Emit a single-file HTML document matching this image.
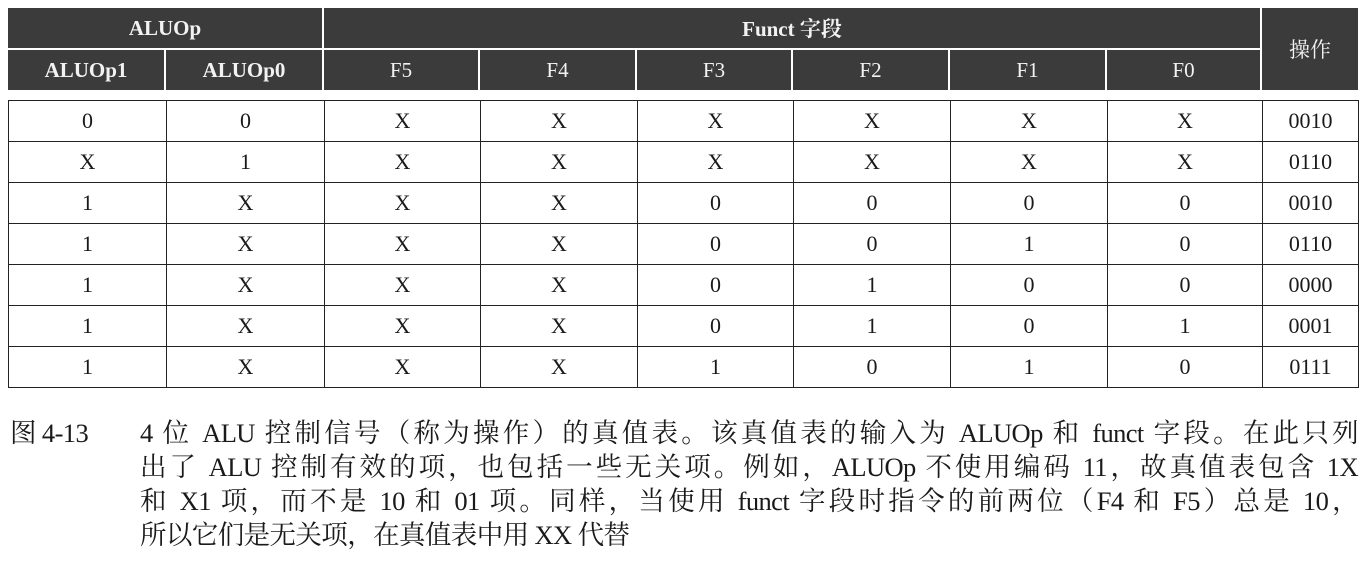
<!DOCTYPE html>
<html><head><meta charset="utf-8"><style>
body{margin:0;width:1368px;height:572px;background:#fff;position:relative;overflow:hidden;font-family:"Liberation Serif","Noto Serif CJK SC",serif;color:#1a1a1a}
.h{position:absolute;background:#3b3b3b;color:#f2f2f2;font-weight:bold;font-size:21px;display:flex;align-items:center;justify-content:center}
table{position:absolute;left:8px;top:100px;border-collapse:collapse;font-size:22px}
td{border:1.5px solid #222;height:40px;text-align:center;padding:0}
.cap{position:absolute;left:140px;width:1218px;font-size:26.5px;font-family:"Liberation Serif","Noto Serif CJK SC",serif;text-align:justify;text-align-last:justify;white-space:nowrap;line-height:28px;letter-spacing:-0.6px}
</style></head><body>
<div class="h" style="left:8px;top:8px;width:314px;height:40px">ALUOp</div>
<div class="h" style="left:324px;top:8px;width:936px;height:40px">Funct 字段</div>
<div class="h" style="left:1262px;top:8px;width:96px;height:82px;font-weight:normal">操作</div>
<div class="h" style="left:8px;top:50px;width:156px;height:40px">ALUOp1</div>
<div class="h" style="left:166px;top:50px;width:156px;height:40px">ALUOp0</div>
<div class="h" style="left:324px;top:50px;width:154px;height:40px;font-weight:normal">F5</div>
<div class="h" style="left:480px;top:50px;width:155px;height:40px;font-weight:normal">F4</div>
<div class="h" style="left:637px;top:50px;width:154px;height:40px;font-weight:normal">F3</div>
<div class="h" style="left:793px;top:50px;width:155px;height:40px;font-weight:normal">F2</div>
<div class="h" style="left:950px;top:50px;width:155px;height:40px;font-weight:normal">F1</div>
<div class="h" style="left:1107px;top:50px;width:153px;height:40px;font-weight:normal">F0</div>
<table>
<colgroup><col style="width:158px"><col style="width:158px"><col style="width:156px"><col style="width:157px"><col style="width:156px"><col style="width:157px"><col style="width:157px"><col style="width:155px"><col style="width:96px"></colgroup>
<tr><td>0</td><td>0</td><td>X</td><td>X</td><td>X</td><td>X</td><td>X</td><td>X</td><td>0010</td></tr>
<tr><td>X</td><td>1</td><td>X</td><td>X</td><td>X</td><td>X</td><td>X</td><td>X</td><td>0110</td></tr>
<tr><td>1</td><td>X</td><td>X</td><td>X</td><td>0</td><td>0</td><td>0</td><td>0</td><td>0010</td></tr>
<tr><td>1</td><td>X</td><td>X</td><td>X</td><td>0</td><td>0</td><td>1</td><td>0</td><td>0110</td></tr>
<tr><td>1</td><td>X</td><td>X</td><td>X</td><td>0</td><td>1</td><td>0</td><td>0</td><td>0000</td></tr>
<tr><td>1</td><td>X</td><td>X</td><td>X</td><td>0</td><td>1</td><td>0</td><td>1</td><td>0001</td></tr>
<tr><td>1</td><td>X</td><td>X</td><td>X</td><td>1</td><td>0</td><td>1</td><td>0</td><td>0111</td></tr>
</table>
<div class="cap" style="left:10px;width:120px;top:419px;text-align:left;text-align-last:left">图 4-13</div>
<div class="cap" style="top:419px">4 位 ALU 控制信号（称为操作）的真值表。该真值表的输入为 ALUOp 和 funct 字段。在此只列</div>
<div class="cap" style="top:453px">出了 ALU 控制有效的项，也包括一些无关项。例如，ALUOp 不使用编码 11，故真值表包含 1X</div>
<div class="cap" style="top:487px">和 X1 项，而不是 10 和 01 项。同样，当使用 funct 字段时指令的前两位（F4 和 F5）总是 10，</div>
<div class="cap" style="top:521px;text-align:left;text-align-last:left">所以它们是无关项，在真值表中用 XX 代替</div>
</body></html>
